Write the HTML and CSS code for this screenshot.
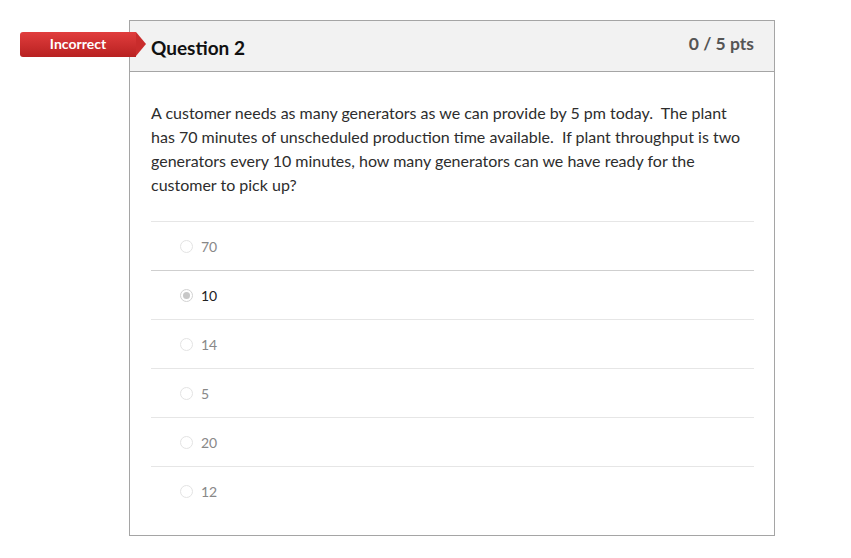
FILE: index.html
```html
<!DOCTYPE html>
<html>
<head>
<meta charset="utf-8">
<link rel="stylesheet" href="styles.css">
</head>
<body>
<div class="card">
  <div class="badge">Incorrect</div>
  <div class="header">
    <span class="title">Question 2</span>
    <span class="pts">0 / 5 pts</span>
  </div>
  <div class="body">
    <p class="text">A customer needs as many generators as we can provide by 5 pm today.&nbsp; The plant has 70 minutes of unscheduled production time available.&nbsp; If plant throughput is two generators every 10 minutes, how many generators can we have ready for the customer to pick up?</p>
    <div class="answers">
      <div class="answer"><span class="radio"></span><span class="label">70</span></div>
      <div class="answer selected"><span class="radio"></span><span class="label">10</span></div>
      <div class="answer"><span class="radio"></span><span class="label">14</span></div>
      <div class="answer"><span class="radio"></span><span class="label">5</span></div>
      <div class="answer"><span class="radio"></span><span class="label">20</span></div>
      <div class="answer"><span class="radio"></span><span class="label">12</span></div>
    </div>
  </div>
</div>
</body>
</html>
```
FILE: styles.css
```css
html, body {
  margin: 0;
  padding: 0;
  background: #fff;
  font-family: Lato, "Liberation Sans", sans-serif;
  color: #2d3b45;
}
.card {
  position: relative;
  box-sizing: border-box;
  margin: 20px 0 0 129px;
  width: 646px;
  height: 516px;
  border: 1px solid #a5a5a5;
}
.badge {
  position: absolute;
  left: -110px;
  top: 11px;
  width: 116px;
  height: 25px;
  box-sizing: border-box;
  border-radius: 3px 0 0 3px;
  background: linear-gradient(#e13d3d, #b82121);
  color: #fff;
  font-size: 14px;
  font-weight: 700;
  line-height: 24px;
  text-align: center;
}
.badge::after {
  content: "";
  position: absolute;
  right: -10px;
  top: 0;
  border-style: solid;
  border-width: 12.5px 0 12.5px 10px;
  border-color: transparent transparent transparent #c92c2c;
}
.header {
  box-sizing: border-box;
  background: #f2f2f2;
  border-bottom: 1px solid #a5a5a5;
  height: 51px;
  display: flex;
  justify-content: space-between;
  padding: 0 20px 0 21px;
}
.title {
  font-size: 19px;
  font-weight: 700;
  color: #111;
  padding-top: 15px;
}
.pts {
  font-size: 17.5px;
  font-weight: 700;
  color: #555;
  padding-top: 12px;
}
.body {
  padding: 29px 20px 0 21px;
}
.text {
  margin: 0;
  font-size: 16px;
  line-height: 24px;
  color: #2d2d2d;
}
.answers {
  margin-top: 24px;
}
.answer {
  height: 49px;
  box-sizing: border-box;
  border-top: 1px solid #e6e6e6;
  display: flex;
  align-items: center;
  padding-left: 29px;
}
.answer.selected {
  border-top-color: #cfcfcf;
}
.radio {
  width: 13px;
  height: 13px;
  box-sizing: border-box;
  border: 1px solid #e3e3e3;
  border-radius: 50%;
  background: #fff;
  margin-right: 8px;
  position: relative;
}
.selected .radio {
  border-color: #d2d2d2;
}
.selected .radio::after {
  content: "";
  position: absolute;
  left: 2px;
  top: 2px;
  width: 7px;
  height: 7px;
  border-radius: 50%;
  background: #c8c8c8;
}
.label {
  font-size: 14px;
  color: #888;
}
.selected .label {
  color: #222;
}
```
